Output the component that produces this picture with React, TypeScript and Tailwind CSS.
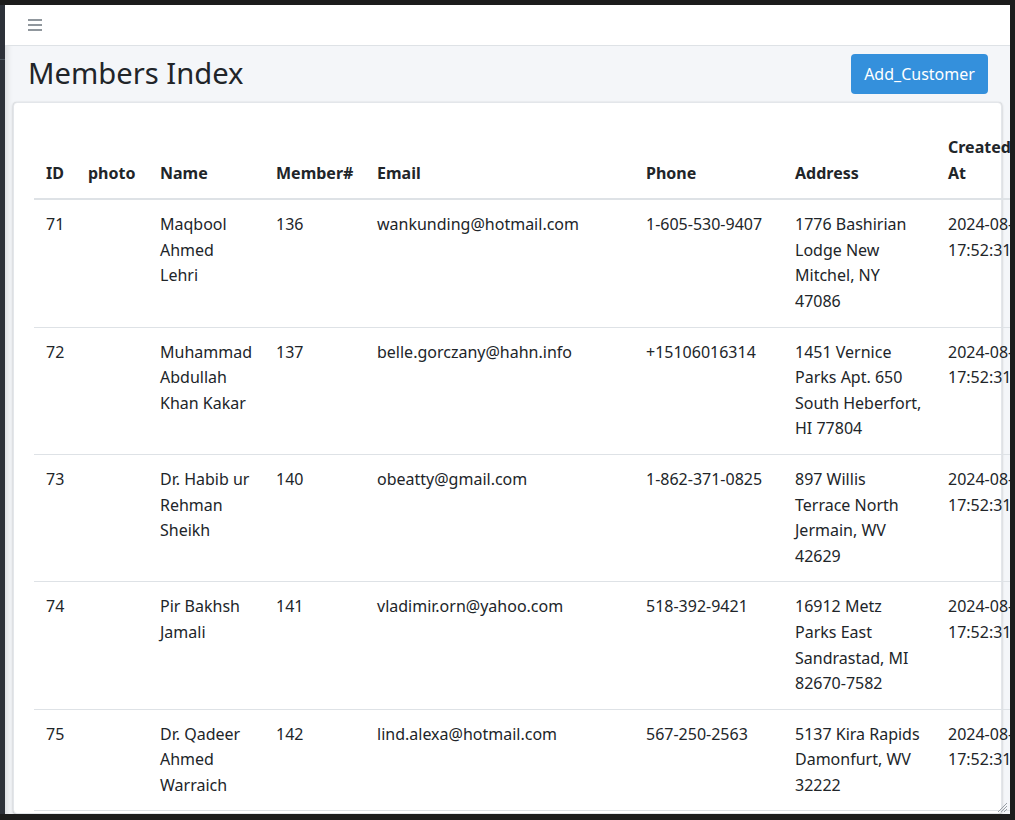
import { type ReactNode } from 'react'

type Member = {
  id: number
  name: string
  number: number
  email: string
  phone: string
  address: string
  date: string
  time: string
}

const members: Member[] = [
  { id: 71, name: 'Maqbool Ahmed Lehri', number: 136, email: 'wankunding@hotmail.com', phone: '1-605-530-9407', address: '1776 Bashirian Lodge New Mitchel, NY 47086', date: '2024-08-17', time: '17:52:31' },
  { id: 72, name: 'Muhammad Abdullah Khan Kakar', number: 137, email: 'belle.gorczany@hahn.info', phone: '+15106016314', address: '1451 Vernice Parks Apt. 650 South Heberfort, HI 77804', date: '2024-08-17', time: '17:52:31' },
  { id: 73, name: 'Dr. Habib ur Rehman Sheikh', number: 140, email: 'obeatty@gmail.com', phone: '1-862-371-0825', address: '897 Willis Terrace North Jermain, WV 42629', date: '2024-08-17', time: '17:52:31' },
  { id: 74, name: 'Pir Bakhsh Jamali', number: 141, email: 'vladimir.orn@yahoo.com', phone: '518-392-9421', address: '16912 Metz Parks East Sandrastad, MI 82670-7582', date: '2024-08-17', time: '17:52:31' },
  { id: 75, name: 'Dr. Qadeer Ahmed Warraich', number: 142, email: 'lind.alexa@hotmail.com', phone: '567-250-2563', address: '5137 Kira Rapids Damonfurt, WV 32222', date: '2024-08-17', time: '17:52:31' },
]

function Th({ children }: { children: ReactNode }) {
  return <th className="px-3 py-3 text-left align-bottom font-bold border-b-2 border-[#dee2e6]">{children}</th>
}

function Td({ children }: { children?: ReactNode }) {
  return <td className="px-3 py-3 align-top border-b border-[#dee2e6]">{children}</td>
}

export default function App() {
  return (
    <div className="w-[1015px] h-[820px] bg-[#1c1c1c] pt-[5px] pr-[5px] pb-[6px] flex font-['Noto_Sans',sans-serif] text-[#212529]">
      {/* sidebar edge */}
      <div className="w-[5px] bg-[#2d3139] flex flex-col">
        <div className="h-[55px] border-b border-[#4b545c]" />
      </div>

      <div className="relative flex-1 flex flex-col bg-[#f4f6f9] overflow-hidden shadow-[inset_6px_0_6px_-4px_rgba(0,0,0,0.12)]">
        <nav className="h-[41px] shrink-0 bg-white border-b border-[#dee2e6] flex items-center pl-[23px]">
          <svg width="14" height="12" viewBox="0 0 14 12" className="text-[#6c757d]">
            <path d="M0 1h14M0 6h14M0 11h14" stroke="currentColor" strokeWidth="1.6" />
          </svg>
        </nav>

        <div className="flex items-center justify-between pl-[23px] pr-[22px] pt-[8px] pb-[8px]">
          <h1 className="text-[29.2px] leading-[1.2] font-normal">Members Index</h1>
          <button className="h-[40px] w-[137px] rounded-[4px] bg-[#3490dc] text-white text-[16px]">Add_Customer</button>
        </div>

        <div className="mx-[8px] bg-white rounded-[4px] border border-[#e3e6ea] shadow-[0_0_1px_rgba(0,0,0,0.125),0_1px_3px_rgba(0,0,0,0.2)] pt-[20px] px-[20px] flex-1">
          <table className="table-fixed border-collapse w-[1006px] text-[16px] leading-[1.6]">
            <colgroup>
              <col className="w-[42px]" />
              <col className="w-[72px]" />
              <col className="w-[116px]" />
              <col className="w-[101px]" />
              <col className="w-[269px]" />
              <col className="w-[149px]" />
              <col className="w-[153px]" />
              <col className="w-[104px]" />
            </colgroup>
            <thead>
              <tr>
                <Th>ID</Th>
                <Th>photo</Th>
                <Th>Name</Th>
                <Th>Member#</Th>
                <Th>Email</Th>
                <Th>Phone</Th>
                <Th>Address</Th>
                <Th>Created At</Th>
              </tr>
            </thead>
            <tbody>
              {members.map((m) => (
                <tr key={m.id}>
                  <Td>{m.id}</Td>
                  <Td />
                  <Td>{m.name}</Td>
                  <Td>{m.number}</Td>
                  <Td>{m.email}</Td>
                  <Td>{m.phone}</Td>
                  <Td>{m.address}</Td>
                  <Td>
                    <span className="whitespace-nowrap">{m.date}</span> {m.time}
                  </Td>
                </tr>
              ))}
            </tbody>
          </table>
        </div>

        {/* resize grip */}
        <svg width="11" height="11" viewBox="0 0 11 11" className="absolute right-[2px] bottom-[1px] text-[#9aa0a6]">
          <path d="M10 1L1 10M10 4L4 10M10 7L7 10" stroke="currentColor" strokeWidth="1" />
        </svg>
      </div>
    </div>
  )
}
